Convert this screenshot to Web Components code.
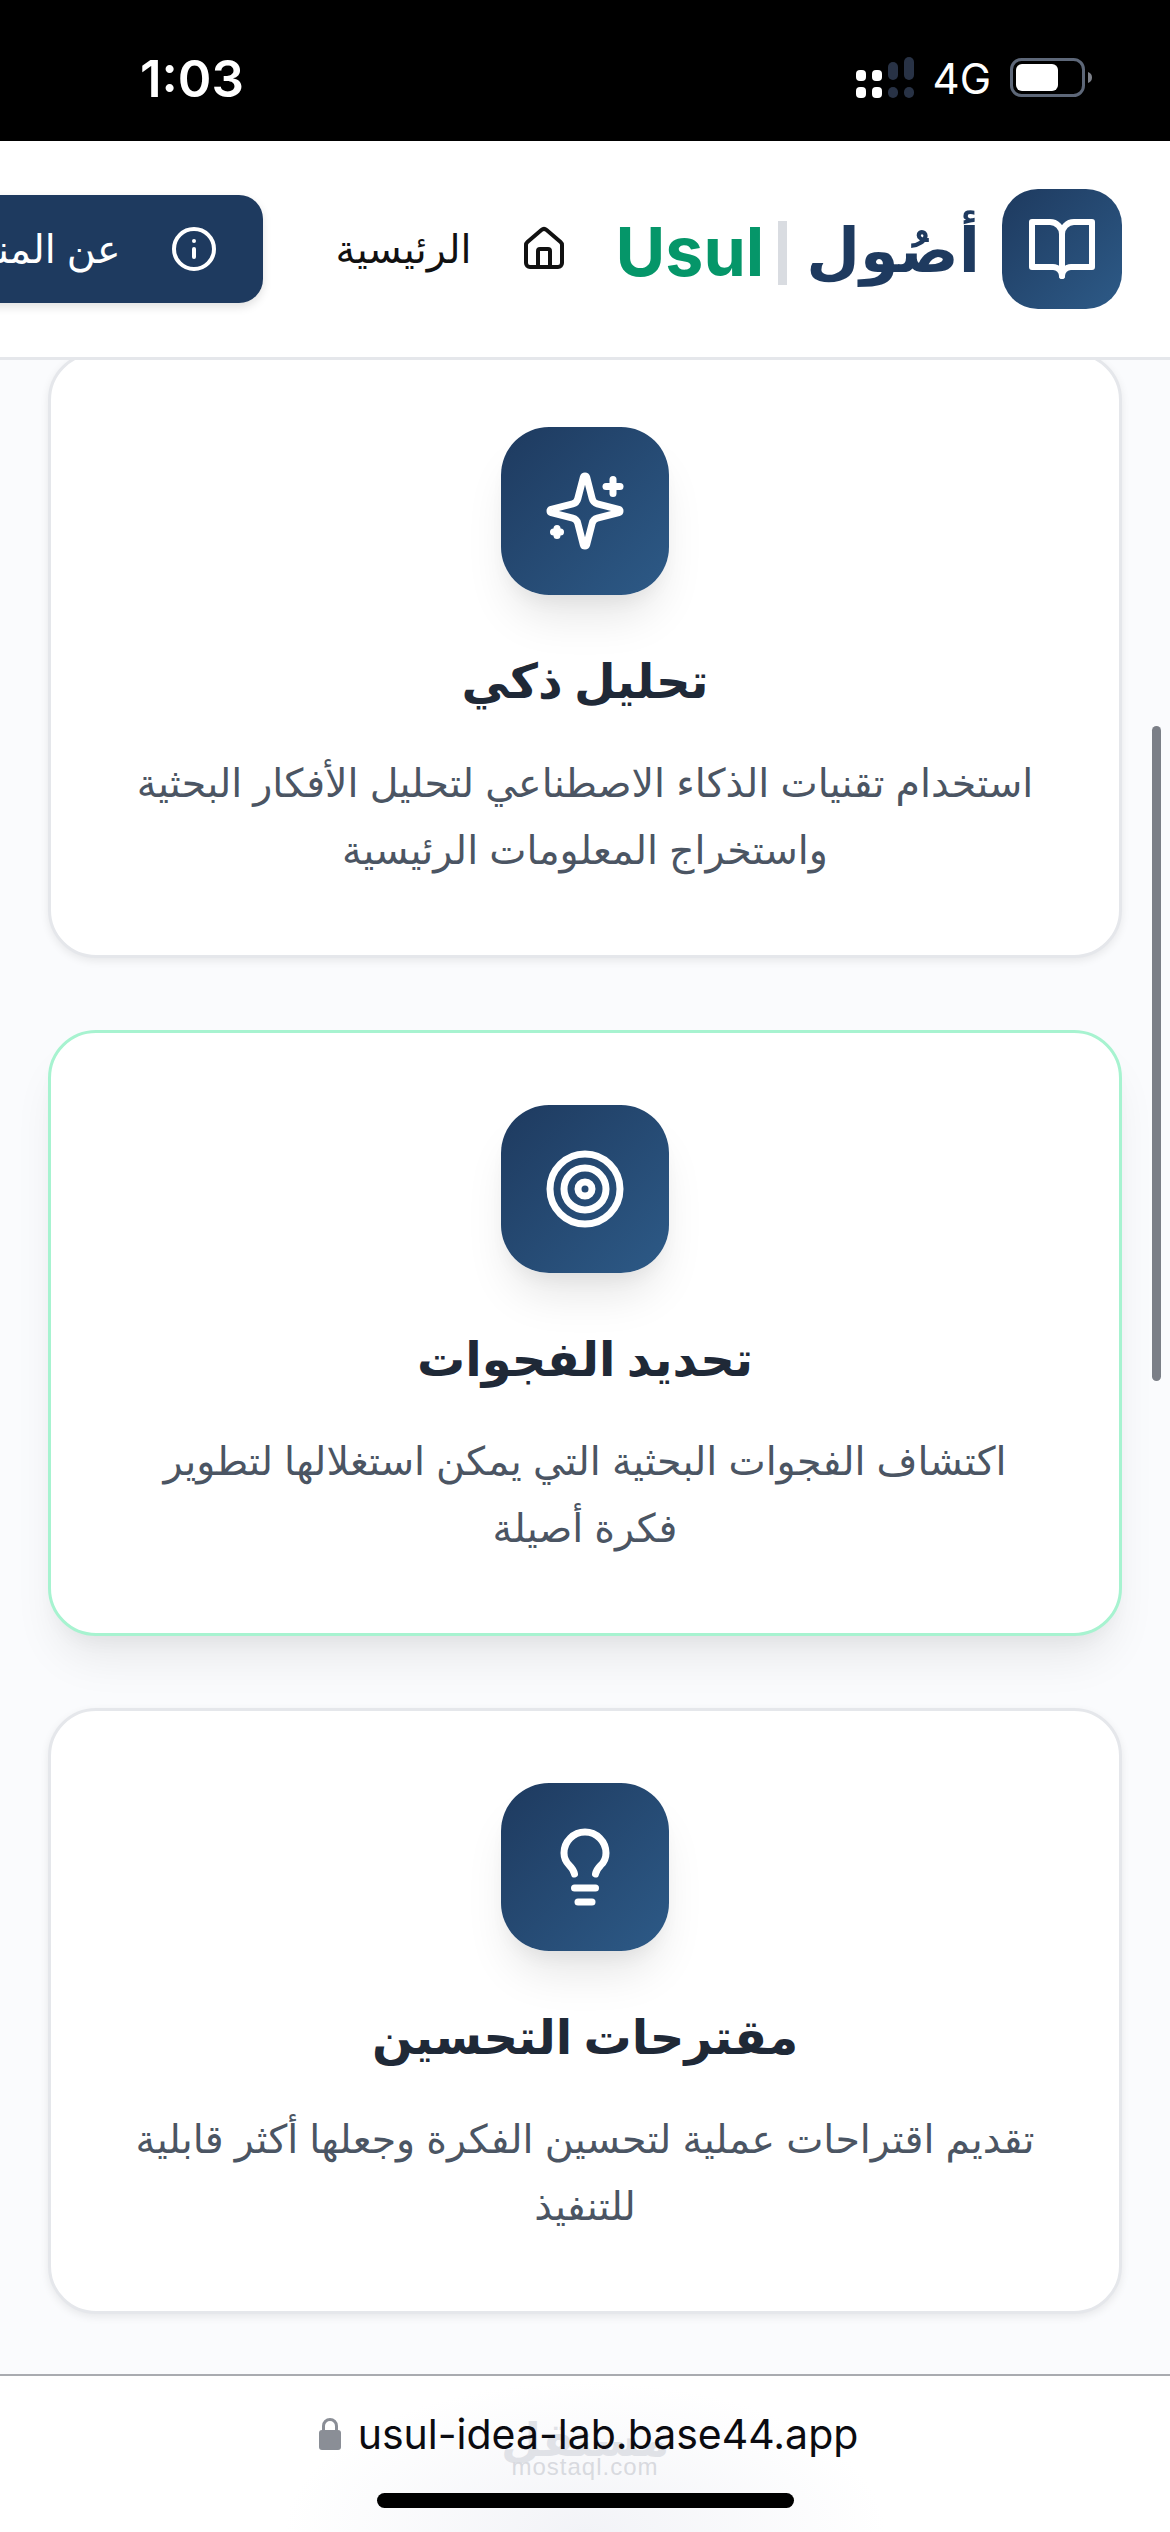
<!DOCTYPE html>
<html lang="ar">
<head>
<meta charset="utf-8">
<title>Usul</title>
<style>
  html, body { margin: 0; height: 100%; }
  body {
    width: 1170px;
    height: 2532px;
    overflow: hidden;
    display: flex;
    flex-direction: column;
    background: #fafbfd;
    font-family: Inter, "DejaVu Sans", sans-serif;
  }
</style>
</head>
<body>
<status-bar></status-bar>
<site-header></site-header>
<feature-list>
  <feature-card heading="تحليل ذكي" icon="sparkles" style="--card-lift:-8px">استخدام تقنيات الذكاء الاصطناعي لتحليل الأفكار البحثية واستخراج المعلومات الرئيسية</feature-card>
  <feature-card heading="تحديد الفجوات" icon="target" active>اكتشاف الفجوات البحثية التي يمكن استغلالها لتطوير فكرة أصيلة</feature-card>
  <feature-card heading="مقترحات التحسين" icon="bulb">تقديم اقتراحات عملية لتحسين الفكرة وجعلها أكثر قابلية للتنفيذ</feature-card>
</feature-list>
<url-bar></url-bar>

<script>
const ICONS = {
  book: '<path d="M2 3h6a4 4 0 0 1 4 4v14a3 3 0 0 0-3-3H2z"/><path d="M22 3h-6a4 4 0 0 0-4 4v14a3 3 0 0 1 3-3h7z"/>',
  home: '<path d="M15 21v-8a1 1 0 0 0-1-1h-4a1 1 0 0 0-1 1v8"/><path d="M3 10a2 2 0 0 1 .709-1.528l7-5.999a2 2 0 0 1 2.582 0l7 5.999A2 2 0 0 1 21 10v9a2 2 0 0 1-2 2H5a2 2 0 0 1-2-2z"/>',
  info: '<circle cx="12" cy="12" r="10"/><path d="M12 16v-4"/><path d="M12 8h.01"/>',
  sparkles: '<path d="M9.937 15.5A2 2 0 0 0 8.5 14.063l-6.135-1.582a.5.5 0 0 1 0-.962L8.5 9.936A2 2 0 0 0 9.937 8.5l1.582-6.135a.5.5 0 0 1 .963 0L14.063 8.5A2 2 0 0 0 15.5 9.937l6.135 1.581a.5.5 0 0 1 0 .964L15.5 14.063a2 2 0 0 0-1.437 1.437l-1.582 6.135a.5.5 0 0 1-.963 0z"/><path d="M20 3v4"/><path d="M22 5h-4"/><path d="M4 17v2"/><path d="M5 18H3"/>',
  target: '<circle cx="12" cy="12" r="10"/><circle cx="12" cy="12" r="6"/><circle cx="12" cy="12" r="2"/>',
  bulb: '<path d="M15 14c.2-1 .7-1.7 1.500-2.500 1-.9 1.500-2.200 1.500-3.500A6 6 0 0 0 6 8c0 1 .2 2.200 1.500 3.500.7.7 1.300 1.500 1.500 2.500"/><path d="M9 18h6"/><path d="M10 22h4"/>'
};

function icon(name, size) {
  return `<svg width="${size}" height="${size}" viewBox="0 0 24 24" fill="none" stroke="currentColor" stroke-width="2" stroke-linecap="round" stroke-linejoin="round">${ICONS[name]}</svg>`;
}

class StatusBar extends HTMLElement {
  connectedCallback() {
    this.attachShadow({ mode: 'open' }).innerHTML = `
      <style>
        :host {
          display: flex;
          flex: none;
          height: 141px;
          box-sizing: border-box;
          padding: 50px 78px 0 140px;
          justify-content: space-between;
          background: #000;
          color: #fff;
          font-family: Inter, "Liberation Sans", sans-serif;
        }
        .time { font-size: 51px; font-weight: 600; line-height: 58px; }
        .right { display: flex; align-items: flex-start; }
        .signal { margin-top: 7px; }
        .net { font-size: 42px; line-height: 50px; margin: 4px 19px 0 19px; }
        .battery { margin-top: 8px; }
      </style>
      <span class="time">1:03</span>
      <div class="right">
        <svg class="signal" width="58" height="41" viewBox="0 0 58 41">
          <g fill="#fff">
            <rect x="0" y="13" width="10" height="11" rx="4"/><rect x="16" y="13" width="10" height="11" rx="4"/>
            <rect x="0" y="30" width="10" height="11" rx="4"/><rect x="16" y="30" width="10" height="11" rx="4"/>
          </g>
          <g fill="#283245">
            <rect x="32" y="5" width="10" height="18" rx="5"/><rect x="48" y="0" width="10" height="23" rx="5"/>
            <rect x="32" y="30" width="10" height="11" rx="5"/><rect x="48" y="30" width="10" height="11" rx="5"/>
          </g>
        </svg>
        <span class="net">4G</span>
        <svg class="battery" width="82" height="39" viewBox="0 0 82 39">
          <rect x="1.500" y="1.500" width="72" height="36" rx="10" fill="none" stroke="#5d6778" stroke-width="3"/>
          <rect x="6" y="6" width="42" height="27" rx="6" fill="#fff"/>
          <path d="M78 14c3 1 4 3 4 5.500s-1 4.500-4 5.500z" fill="#7d818a"/>
        </svg>
      </div>
    `;
  }
}

class SiteHeader extends HTMLElement {
  connectedCallback() {
    this.attachShadow({ mode: 'open' }).innerHTML = `
      <style>
        :host {
          display: flex;
          flex: none;
          direction: rtl;
          height: 219px;
          box-sizing: border-box;
          padding-right: 48px;
          align-items: center;
          gap: 48px;
          overflow: hidden;
          position: relative;
          z-index: 2;
          background: #fff;
          border-bottom: 3px solid #e5e7eb;
        }
        .logo { display: flex; flex: none; align-items: center; gap: 22px; }
        .mark {
          width: 120px; height: 120px; border-radius: 36px;
          display: grid; place-items: center; flex: none; color: #fff;
          background: linear-gradient(135deg, #1e3a5f, #2d5a87);
        }
        .name { display: flex; align-items: center; gap: 19px; font-size: 62px; font-weight: 700; }
        .ar { color: #1e3a5f; }
        .sep { width: 9px; height: 64px; background: #d9dce1; margin: 8px 0 0 -5px; }
        .en { color: #059669; font-family: Inter, sans-serif; font-size: 68px; direction: ltr; margin-top: 4px; }
        .home { display: flex; flex: none; align-items: center; gap: 48px; color: #111; font-size: 39.5px; }
        .home svg { flex: none; }
        .about {
          display: flex; flex: none; align-items: center; gap: 50px;
          height: 108px; padding: 0 45px; margin-right: 24px; border-radius: 24px;
          color: #fff; font-size: 39.5px;
          background: #1e3a5f;
          box-shadow: 0 4px 10px rgba(0,0,0,.12);
        }
        .about svg { flex: none; }
      </style>
      <div class="logo">
        <div class="mark">${icon('book', 72)}</div>
        <div class="name"><span class="ar">أصُول</span><span class="sep"></span><span class="en">Usul</span></div>
      </div>
      <div class="home">${icon('home', 48)}<span>الرئيسية</span></div>
      <div class="about">${icon('info', 48)}<span>عن المنصة</span></div>
    `;
  }
}

class FeatureList extends HTMLElement {
  connectedCallback() {
    this.attachShadow({ mode: 'open' }).innerHTML = `
      <style>
        :host {
          display: flex;
          flex: 1;
          min-height: 0;
          flex-direction: column;
          gap: 72px;
          box-sizing: border-box;
          padding: 0 48px;
          overflow: hidden;
          position: relative;
        }
        .thumb {
          position: absolute; right: 9px; top: 366px;
          width: 9px; height: 655px; border-radius: 5px; background: #7b7f87;
        }
      </style>
      <slot></slot>
      <div class="thumb"></div>
    `;
  }
}

class FeatureCard extends HTMLElement {
  connectedCallback() {
    const active = this.hasAttribute('active');
    this.attachShadow({ mode: 'open' }).innerHTML = `
      <style>
        :host {
          display: block;
          flex: none;
          direction: rtl;
          box-sizing: border-box;
          margin-top: var(--card-lift, 0);
          padding: 72px;
          text-align: center;
          background: #fff;
          border: 3px solid ${active ? '#a7f3d0' : '#e5e7eb'};
          border-radius: 48px;
          box-shadow: ${active ? '0 30px 45px -9px rgba(0,0,0,.08), 0 12px 18px -6px rgba(0,0,0,.04)' : '0 3px 9px rgba(0,0,0,.08)'};
        }
        .icon {
          width: 168px; height: 168px; margin: 0 auto 44px; border-radius: 48px;
          display: grid; place-items: center; color: #fff;
          background: linear-gradient(135deg, #1e3a5f, #2d5a87);
          box-shadow: 0 30px 45px -9px rgba(0,0,0,.1), 0 12px 18px -6px rgba(0,0,0,.05);
        }
        h3 { margin: 0 0 27px; font-size: 48px; line-height: 84px; font-weight: 700; color: #1f2937; }
        p { margin: 0 0 -1px; font-size: 39.5px; line-height: 67px; color: #4b5563; }
      </style>
      <div class="icon">${icon(this.getAttribute('icon'), 84)}</div>
      <h3>${this.getAttribute('heading')}</h3>
      <p><slot></slot></p>
    `;
  }
}

class UrlBar extends HTMLElement {
  connectedCallback() {
    this.attachShadow({ mode: 'open' }).innerHTML = `
      <style>
        :host {
          display: block;
          flex: none;
          height: 158px;
          box-sizing: border-box;
          border-top: 2px solid #a9abb0;
          position: relative;
          background: radial-gradient(ellipse 300px 150px at 50% 100%, #f2f3f7, #fff);
        }
        .url {
          display: flex; justify-content: center; align-items: center; gap: 17px;
          padding: 33px 0 0 7px;
          font: 41px/50px Inter, "Liberation Sans", sans-serif;
          color: #0b0b10;
          position: relative;
        }
        .mark {
          position: absolute; left: 0; right: 0; top: 76px; text-align: center;
          font: 24px/30px "Liberation Sans", sans-serif; letter-spacing: 1px; color: #d8dadf;
        }
        .mark-ar {
          position: absolute; left: 0; right: 0; top: 36px; text-align: center;
          direction: rtl; font: 700 46px/56px "DejaVu Sans", sans-serif; color: #e0e2e7;
        }
        .bar {
          position: absolute; left: 377px; top: 117px;
          width: 417px; height: 15px; border-radius: 8px; background: #000;
        }
      </style>
      <div class="mark-ar">مستقل</div>
      <div class="mark">mostaql.com</div>
      <div class="url">
        <svg width="22" height="32" viewBox="0 0 22 32"><path d="M4.500 14v-6a6.500 6.500 0 0 1 13 0v6" fill="none" stroke="#8a8e96" stroke-width="3"/><rect y="12" width="22" height="20" rx="3" fill="#8a8e96"/></svg>
        <span>usul-idea-lab.base44.app</span>
      </div>
      <div class="bar"></div>
    `;
  }
}

customElements.define('status-bar', StatusBar);
customElements.define('site-header', SiteHeader);
customElements.define('feature-list', FeatureList);
customElements.define('feature-card', FeatureCard);
customElements.define('url-bar', UrlBar);
</script>
</body>
</html>
